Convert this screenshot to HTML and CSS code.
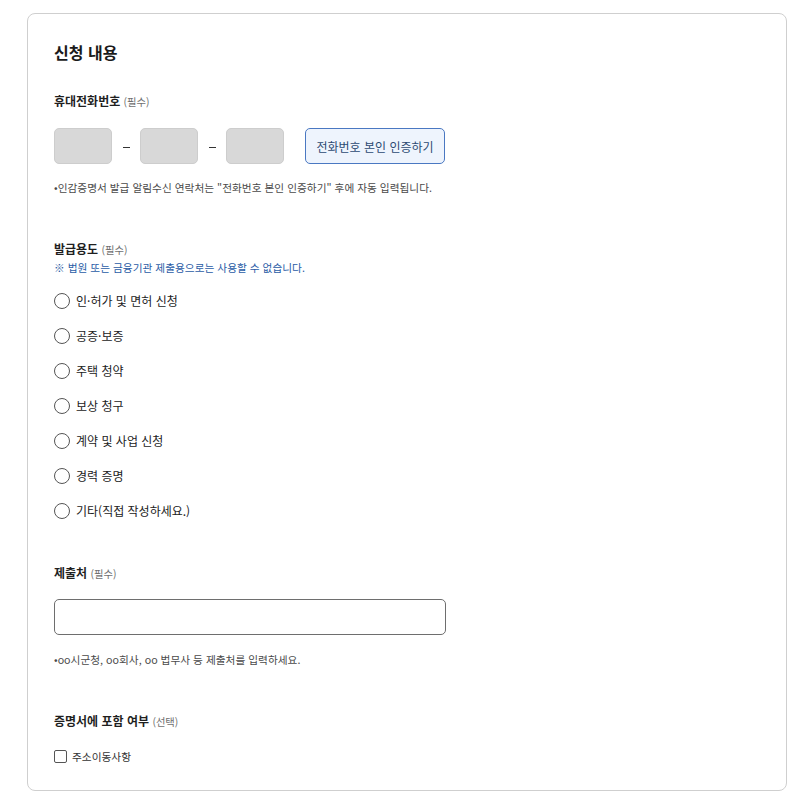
FILE: index.html
```html
<!DOCTYPE html>
<html lang="ko">
<head>
<meta charset="utf-8">
<title>신청 내용</title>
<link rel="stylesheet" href="styles.css">
</head>
<body>
<div class="page">
  <section class="card">
    <h2 class="card-title">신청 내용</h2>

    <div class="label sec-phone">휴대전화번호 <span class="opt">(필수)</span></div>
    <div class="phone-row">
      <div class="phone-box"></div>
      <span class="dash"><span class="dash-line"></span></span>
      <div class="phone-box"></div>
      <span class="dash"><span class="dash-line"></span></span>
      <div class="phone-box"></div>
      <button class="verify-btn" type="button">전화번호 본인 인증하기</button>
    </div>
    <p class="note note-phone">•인감증명서 발급 알림수신 연락처는 "전화번호 본인 인증하기" 후에 자동 입력됩니다.</p>

    <div class="label sec-purpose">발급용도 <span class="opt">(필수)</span></div>
    <p class="warn">※ 법원 또는 금융기관 제출용으로는 사용할 수 없습니다.</p>
    <ul class="radio-list">
      <li class="radio-item"><span class="radio"></span>인·허가 및 면허 신청</li>
      <li class="radio-item"><span class="radio"></span>공증·보증</li>
      <li class="radio-item"><span class="radio"></span>주택 청약</li>
      <li class="radio-item"><span class="radio"></span>보상 청구</li>
      <li class="radio-item"><span class="radio"></span>계약 및 사업 신청</li>
      <li class="radio-item"><span class="radio"></span>경력 증명</li>
      <li class="radio-item"><span class="radio"></span>기타(직접 작성하세요.)</li>
    </ul>

    <div class="label sec-submit">제출처 <span class="opt">(필수)</span></div>
    <div class="text-input"></div>
    <p class="note note-submit">•oo시군청, oo회사, oo 법무사 등 제출처를 입력하세요.</p>

    <div class="label sec-include">증명서에 포함 여부 <span class="opt">(선택)</span></div>
    <div class="check-row"><span class="checkbox"></span>주소이동사항</div>
  </section>
</div>
</body>
</html>
```

FILE: styles.css
```css
* { box-sizing: border-box; }
html, body { margin: 0; padding: 0; background: #ffffff; }
body {
  font-family: "Noto Sans CJK KR", "Noto Sans", sans-serif;
  color: #222222;
}
.page {
  padding: 13px 20px 15px 27px;
}
.card {
  width: 760px;
  border: 1px solid #cfcfcf;
  border-radius: 8px;
  padding: 27px 26px 25px 26px;
  display: flex;
  flex-direction: column;
  align-items: flex-start;
}
.card-title {
  margin: 0;
  font-size: 16px;
  line-height: 22px;
  font-weight: 700;
  color: #1a1a1a;
}
.label {
  font-size: 12px;
  line-height: 18px;
  font-weight: 700;
  color: #1f1f1f;
}
.opt {
  font-weight: 400;
  font-size: 10.3px;
  color: #6f6f6f;
}
.sec-phone { margin-top: 29px; }
.phone-row {
  margin-top: 17px;
  display: flex;
  align-items: center;
  height: 36px;
}
.phone-box {
  width: 58px;
  height: 36px;
  background: #d8d8d8;
  border: 1px solid #cdcdcd;
  border-radius: 5px;
}
.dash {
  width: 28px;
  display: flex;
  justify-content: center;
  padding-top: 3px;
}
.dash-line {
  width: 7px;
  height: 1px;
  background: #333333;
}
.verify-btn {
  margin-left: 21px;
  width: 140px;
  height: 36px;
  background: #eef4fd;
  border: 1px solid #4a78c2;
  border-radius: 5px;
  font-family: inherit;
  font-size: 12px;
  color: #2c4a72;
  padding: 0;
  cursor: pointer;
}
.note {
  margin: 0;
  font-size: 10.7px;
  line-height: 18px;
  color: #4a4a4a;
}
.note-phone { margin-top: 15px; }
.sec-purpose { margin-top: 43px; }
.warn {
  margin: 0;
  font-size: 10.7px;
  line-height: 18px;
  color: #2a5ca6;
}
.radio-list {
  list-style: none;
  margin: 6px 0 0 0;
  padding: 0;
}
.radio-item {
  height: 35px;
  display: flex;
  align-items: center;
  font-size: 12px;
  color: #222222;
}
.radio {
  width: 16px;
  height: 16px;
  border: 1.3px solid #555555;
  border-radius: 50%;
  margin-right: 6px;
  flex: none;
}
.sec-submit { margin-top: 36px; }
.text-input {
  margin-top: 16px;
  width: 392px;
  height: 36px;
  border: 1px solid #6e6e6e;
  border-radius: 5px;
  background: #ffffff;
}
.note-submit { margin-top: 16px; }
.sec-include { margin-top: 43px; }
.check-row {
  margin-top: 16px;
  height: 18px;
  display: flex;
  align-items: center;
  font-size: 10.7px;
  color: #333333;
}
.checkbox {
  width: 13px;
  height: 13px;
  border: 1.2px solid #555555;
  border-radius: 2px;
  margin-right: 5px;
  flex: none;
}
```
